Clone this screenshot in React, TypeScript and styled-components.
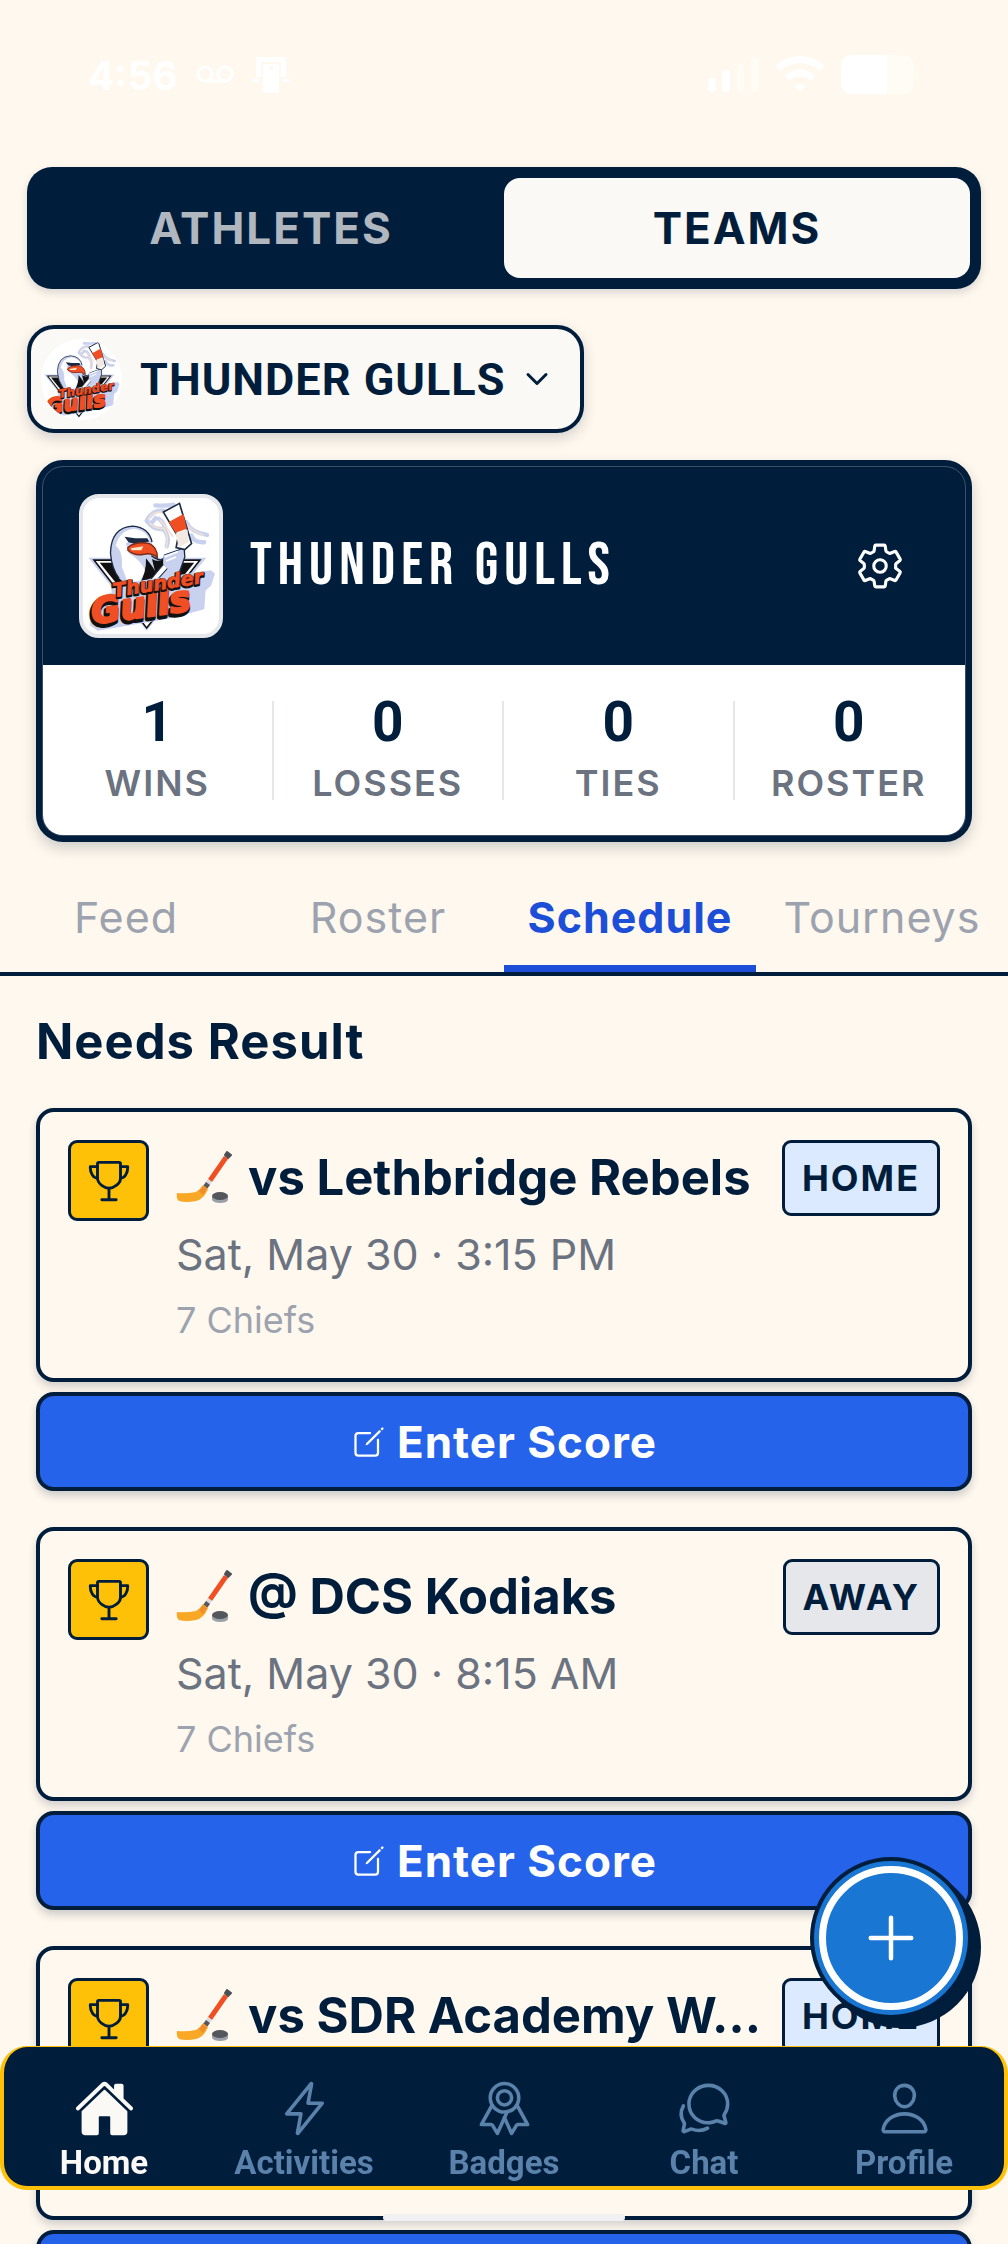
import React, { useState } from "react";
import styled, { createGlobalStyle } from "styled-components";
import {
  IoAdd,
  IoChatbubblesOutline,
  IoChevronDown,
  IoCreateOutline,
  IoFlashOutline,
  IoHome,
  IoPersonOutline,
  IoRibbonOutline,
  IoSettingsOutline,
  IoTrophyOutline,
} from "react-icons/io5";

const navy = "#001e3c";
const cream = "#fff8ee";
const offWhite = "#fbf9f5";
const gold = "#ffc107";
const inter = `Inter, "Liberation Sans", sans-serif`;
const roboto = `Roboto, "Liberation Sans", sans-serif`;

const GlobalStyle = createGlobalStyle`
  * {
    box-sizing: border-box;
  }

  body {
    margin: 0;
    background: ${cream};
    color: ${navy};
    font-family: ${inter};
  }

  button {
    margin: 0;
    padding: 0;
    border: 0;
    background: none;
    color: inherit;
    font-family: inherit;
    cursor: pointer;
  }

  svg {
    display: block;
    flex-shrink: 0;
  }
`;

const Screen = styled.div`
  height: 100vh;
  overflow-x: hidden;
  overflow-y: auto;
  scrollbar-width: none;
`;

const StatusBar = styled.header`
  display: flex;
  justify-content: space-between;
  align-items: center;
  height: 150px;
  padding: 0 88px;
  color: #fff;
`;

const StatusGroup = styled.div`
  display: flex;
  align-items: center;
  gap: 18px;
`;

const Clock = styled.span`
  font-size: 39px;
  font-weight: 700;
`;

const Segmented = styled.div`
  display: flex;
  margin: 17px 27px 0;
  padding: 11px;
  border-radius: 25px;
  background: ${navy};
  box-shadow: 0 4px 8px rgba(0, 30, 60, 0.15);
`;

const Segment = styled.button<{ $active: boolean }>`
  flex: 1;
  height: 100px;
  border-radius: 16px;
  background: ${({ $active }) => ($active ? offWhite : "transparent")};
  color: ${({ $active }) => ($active ? navy : "#b0b7bf")};
  font-size: 44px;
  font-weight: 700;
  letter-spacing: 2px;
`;

const TeamPicker = styled.button`
  display: flex;
  align-items: center;
  height: 108px;
  margin: 36px 27px 0;
  padding: 0 27px 0 10px;
  border: 4px solid ${navy};
  border-radius: 27px;
  background: ${offWhite};
  box-shadow: 0 5px 14px rgba(0, 30, 60, 0.18);
  font-family: ${roboto};
  font-size: 45px;
  font-weight: 700;
  letter-spacing: 1px;
`;

const Avatar = styled.span`
  width: 81px;
  height: 81px;
  margin-right: 18px;
  border-radius: 50%;
  background: #fff;
  overflow: hidden;
`;

const PickerArrow = styled(IoChevronDown)`
  margin-left: 16px;
`;

/* 1px of padding shows through as the thin line inside the border */
const TeamCard = styled.section`
  margin: 27px 36px 0;
  padding: 1px;
  border: 6px solid ${navy};
  border-radius: 27px;
  background: #3b5068;
  box-shadow: 0 6px 14px rgba(0, 30, 60, 0.2);
`;

const TeamHeader = styled.div`
  display: flex;
  align-items: center;
  gap: 27px;
  height: 198px;
  padding: 0 60px 0 36px;
  border-radius: 20px 20px 0 0;
  background: ${navy};
  color: #fff;
`;

const LogoTile = styled.div`
  width: 144px;
  height: 144px;
  border: 4px solid #e5e7eb;
  border-radius: 20px;
  background: #fff;
  overflow: hidden;
`;

const TeamName = styled.h1`
  flex: 1;
  margin: 0;
  font-family: "Bebas Neue", "Roboto Condensed", "Liberation Sans Narrow", sans-serif;
  font-size: 60px;
  font-weight: 400;
  letter-spacing: 6px;
`;

const Stats = styled.dl`
  display: flex;
  margin: 0;
  padding: 36px 0 35px;
  border-radius: 0 0 20px 20px;
  background: #fff;
`;

const Stat = styled.div`
  display: flex;
  flex: 1;
  flex-direction: column-reverse;
  align-items: center;
  justify-content: space-between;
  height: 99px;
  border-right: 2px solid #e5e7eb;

  &:last-child {
    border-right-color: transparent;
  }
`;

const StatValue = styled.dd`
  margin: 0;
  font-family: ${roboto};
  font-size: 55px;
  font-weight: 700;
  line-height: 42px;
`;

const StatLabel = styled.dt`
  color: #6b7280;
  font-size: 36px;
  font-weight: 600;
  letter-spacing: 2px;
  line-height: 34px;
`;

const Tabs = styled.nav`
  display: flex;
  margin-top: 24px;
  border-bottom: 4px solid ${navy};
`;

const Tab = styled.a<{ $active: boolean }>`
  flex: 1;
  height: 106px;
  border-bottom: 7px solid ${({ $active }) => ($active ? "#1d4ed8" : "transparent")};
  color: ${({ $active }) => ($active ? "#1d4ed8" : "#9ca3af")};
  font-size: 43px;
  font-weight: ${({ $active }) => ($active ? 700 : 400)};
  letter-spacing: 1px;
  line-height: 102px;
  text-align: center;
  text-decoration: none;
`;

const Schedule = styled.main`
  padding: 36px 36px 200px;
`;

const SectionTitle = styled.h2`
  margin: 0 0 36px;
  font-size: 49px;
  font-weight: 700;
  letter-spacing: 1px;
  line-height: 60px;
`;

const Game = styled.article`
  display: flex;
  flex-direction: column;
  gap: 10px;
  margin-bottom: 36px;
`;

const GameCard = styled.div`
  display: flex;
  align-items: flex-start;
  padding: 28px 28px 31px;
  border: 4px solid ${navy};
  border-radius: 18px;
  background: ${cream};
  box-shadow: 0 5px 8px rgba(0, 30, 60, 0.18);
`;

const TrophyTile = styled.div`
  display: flex;
  flex-shrink: 0;
  align-items: center;
  justify-content: center;
  width: 81px;
  height: 81px;
  margin-right: 27px;
  border: 3px solid ${navy};
  border-radius: 9px;
  background: ${gold};
`;

const GameInfo = styled.div`
  display: flex;
  flex: 1;
  flex-direction: column;
  gap: 6px;
  min-width: 0;
`;

const GameTitle = styled.h3`
  display: flex;
  align-items: center;
  gap: 16px;
  margin: 0;
  font-size: 49px;
  font-weight: 700;
  line-height: 75px;
  white-space: nowrap;
`;

const GameTime = styled.p`
  margin: 0;
  color: #6b7280;
  font-size: 43px;
  line-height: 66px;
`;

const GamePlace = styled.p`
  margin: 0;
  color: #9ca3af;
  font-size: 36px;
  line-height: 54px;
`;

const SideBadge = styled.span<{ $side: string }>`
  flex-shrink: 0;
  padding: 0 17px;
  border: 3px solid ${navy};
  border-radius: 9px;
  background: ${({ $side }) => ($side === "HOME" ? "#dbeafe" : "#e5e7eb")};
  font-size: 36px;
  font-weight: 700;
  letter-spacing: 2px;
  line-height: 70px;
`;

const ScoreButton = styled.button`
  display: flex;
  align-items: center;
  justify-content: center;
  gap: 10px;
  height: 99px;
  border: 4px solid ${navy};
  border-radius: 18px;
  background: #2563eb;
  box-shadow: 0 5px 8px rgba(0, 30, 60, 0.2);
  color: #fff;
  font-size: 44px;
  font-weight: 700;
  letter-spacing: 1px;
`;

const AddButton = styled.button`
  position: fixed;
  right: 36px;
  bottom: 225px;
  display: flex;
  padding: 5px;
  border: 4px solid ${navy};
  border-radius: 50%;
  background: #1976d2;
  box-shadow: 9px 9px 0 ${navy};
  color: #fff;
`;

const AddRing = styled.span`
  display: flex;
  align-items: center;
  justify-content: center;
  width: 144px;
  height: 144px;
  border: 7px solid #fff;
  border-radius: 50%;
`;

const BottomNav = styled.nav`
  position: fixed;
  right: 0;
  bottom: 54px;
  left: 0;
  display: flex;
  height: 144px;
  border: 4px solid ${gold};
  border-top-width: 1px;
  border-radius: 27px;
  background: ${navy};
`;

const NavItem = styled.a<{ $active: boolean }>`
  display: flex;
  flex: 1;
  flex-direction: column;
  align-items: center;
  padding-top: 30px;
  color: ${({ $active }) => ($active ? offWhite : "#5b82ab")};
  font-family: ${roboto};
  font-size: 33px;
  font-weight: 700;
  line-height: 40px;
  text-decoration: none;
`;

const NavIcon = styled.span`
  display: flex;
  align-items: center;
  justify-content: center;
  height: 62px;
  margin-bottom: 4px;
`;

const HomeIndicator = styled.div`
  position: fixed;
  right: 38%;
  bottom: 23px;
  left: 38%;
  height: 7px;
  border-radius: 4px;
  background: #f1f1f3;
`;

const games = [
  { title: "vs Lethbridge Rebels", side: "HOME", time: "Sat, May 30 · 3:15 PM", place: "7 Chiefs" },
  { title: "@ DCS Kodiaks", side: "AWAY", time: "Sat, May 30 · 8:15 AM", place: "7 Chiefs" },
  { title: "vs SDR Academy W…", side: "HOME", time: "Sat, May 30 · 8:15 AM", place: "7 Chiefs" },
];

const stats = [
  { label: "WINS", value: 1 },
  { label: "LOSSES", value: 0 },
  { label: "TIES", value: 0 },
  { label: "ROSTER", value: 0 },
];

const tabs = ["Feed", "Roster", "Schedule", "Tourneys"];

const navItems = [
  { name: "Home", icon: <IoHome size={61} /> },
  { name: "Activities", icon: <IoFlashOutline size={57} /> },
  { name: "Badges", icon: <IoRibbonOutline size={57} /> },
  { name: "Chat", icon: <IoChatbubblesOutline size={57} /> },
  { name: "Profile", icon: <IoPersonOutline size={57} /> },
];

const GullLogo = () => (
  <svg viewBox="22 24 406 406" width="100%" height="100%" aria-hidden="true">
    <g fill="none" stroke="#c8d1ee" strokeWidth="13" strokeLinecap="round">
      <path d="M262 62 Q228 58 212 92 Q222 110 238 84 M214 94 Q232 120 262 116 Q282 140 272 168" />
      <path d="M238 46 Q274 48 292 44 M248 86 Q268 100 266 122 M330 96 Q346 128 392 134 M346 136 Q352 158 384 156" />
    </g>
    <g fill="none" stroke="#f3dfd2" strokeWidth="5" strokeLinecap="round">
      <path d="M258 66 Q226 64 218 88 M222 100 Q240 118 264 114 Q280 146 270 172" />
      <path d="M252 90 Q268 106 290 138 M334 106 Q354 126 380 134" />
    </g>
    <path d="M38 202 H390 L212 420 Z" fill="#c8d1ee" />
    <path d="M50 207 H376 L212 416 Z" fill="#111" />
    <path d="M60 212 H366 L212 408 Z" fill="#fff" />
    <path d="M72 217 H354 L212 392 Z" fill="#111" />
    <path
      d="M104 188 Q106 112 170 108 Q220 112 228 156 L226 198 Q262 220 266 192 L324 174 L326 200 L300 280 L176 300 L130 264 Q108 236 104 188 Z"
      fill="#c8d1ee"
    />
    <path d="M228 206 Q250 218 262 204 L262 226 L238 248 Z" fill="#111" />
    <path
      d="M130 264 Q108 236 104 188 Q106 112 170 108 Q220 112 228 156 M226 196 Q262 222 266 194 L324 174 L326 200 L304 262"
      fill="none"
      stroke="#1b2b45"
      strokeWidth="4"
    />
    <path d="M120 166 Q132 120 176 116 Q212 122 222 152 L170 146 L150 160 L158 188 Q196 210 208 242 L186 284 L158 282 L138 230 Q142 184 120 166 Z" fill="#fff" />
    <path d="M210 204 Q240 240 242 256 L220 266 L190 282 Q212 246 210 204 Z" fill="#111" />
    <path d="M146 140 L178 144 L214 144 L220 154 L182 162 L158 156 Z" fill="#1b2b45" />
    <path d="M156 172 Q178 152 220 160 Q244 170 244 202 Q226 186 204 192 Q176 198 156 180 Z" fill="#f04e23" stroke="#7b2a16" strokeWidth="4" />
    <path d="M164 174 L202 168 L196 180 L168 180 Z" fill="#f8e8c8" />
    <path d="M262 66 L310 40 L346 160 L326 178 L300 172 L306 140 Z" fill="#fff" stroke="#1b2b45" strokeWidth="5" />
    <path d="M278 96 L322 72 L332 116 L298 128 Z" fill="#f04e23" />
    <path d="M298 130 L334 118 L338 156 L308 170 Z" fill="#f3e9e2" />
    <path d="M262 222 L276 232 L226 288 L212 282 Z" fill="#fff" stroke="#1b2b45" strokeWidth="3" />
    <path d="M262 196 L316 178 L318 212 L286 246 L262 224 Z" fill="#c8d1ee" />
    <path d="M266 200 L306 184 M270 212 L300 200" fill="none" stroke="#fff" strokeWidth="5" />
    <path d="M54 340 Q70 316 108 306 L104 284 L404 240 L416 250 L404 286 L388 300 L384 356 L280 384 L66 420 L42 404 Z" fill="#c8d1ee" />
    <g
      fontFamily={`"DejaVu Sans", sans-serif`}
      fontStyle="italic"
      fontWeight="700"
      strokeLinejoin="round"
    >
      <g transform="translate(52 400) rotate(-8)" fontSize="106">
        <text x="-4" y="8" fill="#111" stroke="#111" strokeWidth="14">Gulls</text>
        <text x="0" y="0" fill="#f04e23" stroke="#f04e23" strokeWidth="7">Gulls</text>
      </g>
      <g transform="translate(114 320) rotate(-9)" fontSize="58">
        <text x="-1" y="3" fill="#111" stroke="#111" strokeWidth="9">Thunder</text>
        <text x="0" y="0" fill="#f04e23" stroke="#f04e23" strokeWidth="2">Thunder</text>
      </g>
    </g>
  </svg>
);

const HockeyStick = () => (
  <svg viewBox="0 0 56 54" width="56" height="54" role="img" aria-label="Hockey">
    <path d="M49 4 L51 1 L55 4 L52 7 Z" fill="#4d5054" stroke="#4d5054" strokeWidth="2" strokeLinejoin="round" />
    <path d="M48 5 L52 8 L36 31 L32 28 Z" fill="#f04e23" />
    <path d="M32 28 L36 31 L33 35 L29 32 Z" fill="#d9dbe0" />
    <path d="M30 31 L34 34 L31 38 L27 35 Z" fill="#55585e" />
    <path d="M27 34 L32 38 Q28 48 20 50 Q10 52 3 50 Q0 48 1 42 Q10 43 20 41 Q24 39 27 34 Z" fill="#f9a825" />
    <path d="M27 35 L31 38 L27 44 L23 40 Z" fill="#f08c2e" />
    <path d="M36 45 V49 Q38 52 44 52 Q51 52 52 49 V45 Z" fill="#9aa0a8" />
    <ellipse cx="44" cy="45" rx="8" ry="4" fill="#54575b" />
  </svg>
);

const StatusIcons = () => (
  <svg width="212" height="40" viewBox="0 0 212 40" fill="#fff" aria-hidden="true">
    <rect x="0" y="23" width="8" height="14" rx="3" />
    <rect x="14" y="15" width="8" height="22" rx="3" />
    <rect x="29" y="9" width="7" height="28" rx="3" opacity="0.4" />
    <rect x="43" y="3" width="7" height="34" rx="3" opacity="0.4" />
    <g fill="none" stroke="#fff" strokeWidth="7">
      <path d="M70 13 Q92 -4 114 13" />
      <path d="M79 23 Q92 13 105 23" />
    </g>
    <path d="M86 31 Q92 26 98 31 L92 37 Z" />
    <path d="M145 0 H179 V39 H145 Q133 39 133 27 V12 Q133 0 145 0 Z" />
    <path d="M179 0 H194 Q206 0 206 12 V27 Q206 39 194 39 H179 Z" opacity="0.4" />
    <path d="M208 13 Q212 19 208 26 Z" opacity="0.4" />
  </svg>
);

const App = () => {
  const [segment, setSegment] = useState("TEAMS");
  const [tab, setTab] = useState("Schedule");
  const [page, setPage] = useState("Home");

  return (
    <>
      <GlobalStyle />
      <Screen>
        <StatusBar>
          <StatusGroup>
            <Clock>4:56</Clock>
            <svg width="38" height="20" viewBox="0 0 38 20" fill="none" stroke="#fff" strokeWidth="3" aria-hidden="true">
              <circle cx="9" cy="9" r="7" />
              <circle cx="29" cy="9" r="7" />
              <path d="M9 16 H29" />
            </svg>
            <svg width="38" height="36" viewBox="0 0 38 36" fill="#fff" aria-hidden="true">
              <path d="M4 0 H34 V20 H29 V5 H9 V20 H4 Z M0 22 H7 V25 H0 Z M31 22 H38 V25 H31 Z" />
              <path d="M11 7 H27 V36 H11 Z M17 9 V12 H21 V9 Z" fillRule="evenodd" />
            </svg>
          </StatusGroup>
          <StatusIcons />
        </StatusBar>

        <Segmented>
          {["ATHLETES", "TEAMS"].map((name) => (
            <Segment key={name} $active={segment === name} onClick={() => setSegment(name)}>
              {name}
            </Segment>
          ))}
        </Segmented>

        <TeamPicker aria-haspopup="listbox">
          <Avatar>
            <GullLogo />
          </Avatar>
          THUNDER GULLS
          <PickerArrow size={32} />
        </TeamPicker>

        <TeamCard>
          <TeamHeader>
            <LogoTile>
              <GullLogo />
            </LogoTile>
            <TeamName>THUNDER GULLS</TeamName>
            <button aria-label="Team settings">
              <IoSettingsOutline size={50} />
            </button>
          </TeamHeader>
          <Stats>
            {stats.map((stat) => (
              <Stat key={stat.label}>
                <StatLabel>{stat.label}</StatLabel>
                <StatValue>{stat.value}</StatValue>
              </Stat>
            ))}
          </Stats>
        </TeamCard>

        <Tabs>
          {tabs.map((name) => (
            <Tab key={name} href={`#${name.toLowerCase()}`} $active={tab === name} onClick={() => setTab(name)}>
              {name}
            </Tab>
          ))}
        </Tabs>

        <Schedule>
          <SectionTitle>Needs Result</SectionTitle>
          {games.map((game) => (
            <Game key={game.title}>
              <GameCard>
                <TrophyTile>
                  <IoTrophyOutline size={46} />
                </TrophyTile>
                <GameInfo>
                  <GameTitle>
                    <HockeyStick />
                    {game.title}
                  </GameTitle>
                  <GameTime>{game.time}</GameTime>
                  <GamePlace>{game.place}</GamePlace>
                </GameInfo>
                <SideBadge $side={game.side}>{game.side}</SideBadge>
              </GameCard>
              <ScoreButton>
                <IoCreateOutline size={36} />
                Enter Score
              </ScoreButton>
            </Game>
          ))}
        </Schedule>
      </Screen>

      <AddButton aria-label="Add game">
        <AddRing>
          <IoAdd size={72} />
        </AddRing>
      </AddButton>

      <BottomNav>
        {navItems.map((item) => (
          <NavItem
            key={item.name}
            href={`#${item.name.toLowerCase()}`}
            $active={page === item.name}
            onClick={() => setPage(item.name)}
          >
            <NavIcon>{item.icon}</NavIcon>
            {item.name}
          </NavItem>
        ))}
      </BottomNav>
      <HomeIndicator />
    </>
  );
};

export default App;
